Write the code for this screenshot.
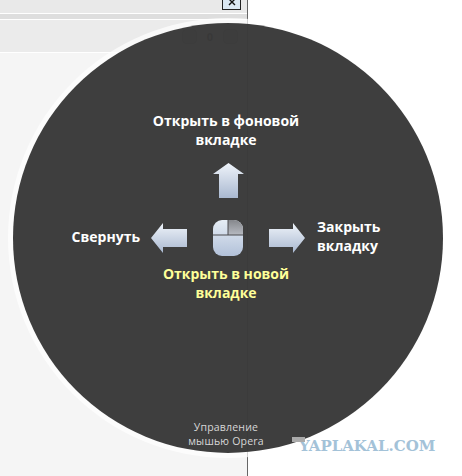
<div class="page">
  <div class="window">
    <div class="titlebar">
      <button class="close" aria-label="Закрыть">
        <svg width="8" height="6" viewBox="0 0 8 6"><path d="M1 -1 L7 5 M7 -1 L1 5" stroke="#111" stroke-width="1.4" fill="none" /></svg>
      </button>
    </div>
    <div class="strip"></div>
    <div class="toolbar">
      <div class="counter">
        <span class="round"></span>
        <b>0</b>
        <span class="round"></span>
      </div>
    </div>
    <div class="content"></div>
  </div>
  <div class="blank"></div>

  <div class="ring">
    <div class="disc">
      <div class="label">Открыть в фоновой<br />вкладке</div>
      <svg class="up" width="31" height="35" viewBox="0 0 31 35">
        <defs>
          <linearGradient id="arrowFill" x1="0" y1="0" x2="0" y2="1">
            <stop offset="0" stop-color="#eff4fa" />
            <stop offset="1" stop-color="#a9b8d0" />
          </linearGradient>
          <linearGradient id="mouseBody" x1="0" y1="0" x2="0" y2="1">
            <stop offset="0" stop-color="#e6edf5" />
            <stop offset="1" stop-color="#b2c1d9" />
          </linearGradient>
          <linearGradient id="mouseBtn" x1="0" y1="0" x2="0" y2="1">
            <stop offset="0" stop-color="#85878c" />
            <stop offset="1" stop-color="#b7bac1" />
          </linearGradient>
        </defs>
        <path d="M15.5 0 L31 11 L25 11 L25 35 L6 35 L6 11 L0 11 Z" fill="url(#arrowFill)" />
      </svg>

      <div class="cross">
        <div class="side left-label">Свернуть</div>
        <svg width="36" height="30" viewBox="0 0 36 30">
          <path d="M0 15 L12 0 L12 6 L36 6 L36 24 L12 24 L12 30 Z" fill="url(#arrowFill)" />
        </svg>
        <svg class="mouse" width="30" height="36" viewBox="0 0 30 36">
          <rect width="30" height="36" rx="9" fill="url(#mouseBody)" />
          <path d="M15 0 H21 A9 9 0 0 1 30 9 V15 H15 Z" fill="url(#mouseBtn)" />
          <path d="M15 0 V15 M0 15 H30" stroke="#4a4b4f" stroke-width="1" fill="none" />
        </svg>
        <svg width="36" height="30" viewBox="0 0 36 30">
          <path d="M36 15 L24 0 L24 6 L0 6 L0 24 L24 24 L24 30 Z" fill="url(#arrowFill)" />
        </svg>
        <div class="side right-label">Закрыть<br />вкладку</div>
      </div>

      <div class="label new-tab">Открыть в новой<br />вкладке</div>
      <div class="spacer"></div>
      <div class="caption">Управление<br />мышью Opera</div>
    </div>
  </div>

  <div class="watermark"><span class="tab"></span>YAPLAKAL.COM</div>
</div>

<style>
  :global(body) {
    margin: 0;
    background: #fff;
    font-family: "Open Sans", "Liberation Sans", sans-serif;
  }
  .page {
    position: relative;
    width: 462px;
    height: 476px;
    overflow: hidden;
    display: flex;
  }
  .window {
    width: 247px;
    height: 476px;
    flex: none;
    display: flex;
    flex-direction: column;
    background: #f5f5f5;
    border-right: 1px solid #666;
  }
  .blank {
    flex: 1;
    background: #fff;
  }
  .titlebar {
    height: 13px;
    background: #e9e9e9;
    border-bottom: 1px solid #fff;
    display: flex;
    justify-content: flex-end;
  }
  .close {
    width: 19px;
    height: 10px;
    margin-right: 6px;
    padding: 0;
    border: 1px solid #222;
    border-top: none;
    background: #dbe8f3;
    display: flex;
    align-items: flex-start;
    justify-content: center;
    overflow: hidden;
  }
  .strip {
    height: 5px;
    background: #dedede;
    border-bottom: 1px solid #fff;
  }
  .toolbar {
    height: 24px;
    padding: 8px 9px 0 0;
    background: #ebebeb;
    border-bottom: 1px solid #fff;
    display: flex;
    justify-content: flex-end;
  }
  .content {
    flex: 1;
  }
  .counter {
    display: flex;
    align-items: center;
    gap: 10px;
    height: 16px;
  }
  .counter b {
    font-size: 11px;
    color: #000;
  }
  .round {
    width: 13px;
    height: 13px;
    border: 1px solid #8a8a8a;
    border-radius: 4px;
    background: #c4c4c4;
  }
  .ring {
    position: absolute;
    left: 8px;
    top: 18px;
    width: 440px;
    height: 440px;
    border-radius: 50%;
    background: rgba(255, 255, 255, 0.7);
    display: flex;
    align-items: center;
    justify-content: center;
  }
  .disc {
    width: 430px;
    height: 430px;
    border-radius: 50%;
    background: rgba(46, 46, 46, 0.92);
    display: flex;
    flex-direction: column;
    align-items: center;
    color: #fff;
    font-size: 14px;
    font-weight: 700;
    line-height: 19px;
    text-align: center;
    padding-top: 88px;
    box-sizing: border-box;
  }
  .label {
    margin-right: 4px;
  }
  .up {
    margin-top: 14px;
    display: block;
  }
  .cross {
    margin-top: 20px;
    display: grid;
    grid-template-columns: 1fr 36px 82px 36px 1fr;
    grid-template-rows: 40px;
    align-items: center;
    width: 100%;
  }
  .mouse {
    justify-self: center;
  }
  .side {
    white-space: nowrap;
    margin-bottom: 4px;
  }
  .left-label {
    justify-self: end;
    margin-right: 11px;
  }
  .right-label {
    justify-self: start;
    margin-left: 12px;
    text-align: left;
  }
  .new-tab {
    margin-top: 6px;
    color: #ffff99;
  }
  .spacer {
    flex: 1;
  }
  .caption {
    margin-right: 4px;
    padding-bottom: 5px;
    font-size: 10.5px;
    font-weight: 400;
    line-height: 14px;
    color: #d6d6d6;
    letter-spacing: 0.2px;
  }
  .watermark {
    position: absolute;
    left: 299px;
    top: 439px;
    font: 700 15px/15px "DejaVu Serif", serif;
    color: #a3c2d8;
  }
  .tab {
    position: absolute;
    left: -7px;
    top: -2px;
    width: 13px;
    height: 5px;
    background: #aaa;
  }
</style>
